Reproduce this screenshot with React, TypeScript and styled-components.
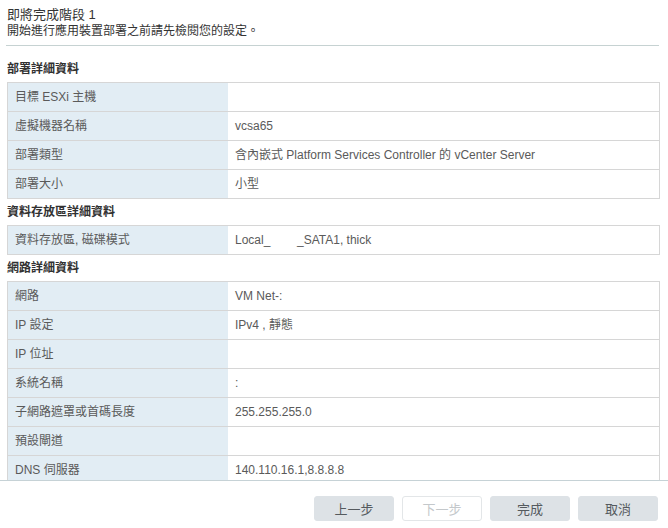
import React from "react";
import styled, { createGlobalStyle } from "styled-components";

const GlobalStyle = createGlobalStyle`
  html, body {
    margin: 0;
    padding: 0;
    background: #ffffff;
  }
  body {
    font-family: "Liberation Sans", "Noto Sans CJK TC", Arial, sans-serif;
    color: #565656;
  }
  * { box-sizing: border-box; }
`;

const Page = styled.div`
  width: 668px;
  height: 528px;
  display: flex;
  flex-direction: column;
  background: #fff;
  overflow: hidden;
`;

const Header = styled.header`
  padding: 6px 9px 0 7px;
  display: flex;
  flex-direction: column;
`;

const Title = styled.h1`
  margin: 0;
  font-size: 13px;
  font-weight: normal;
  line-height: 17px;
  color: #333;
`;

const Subtitle = styled.p`
  margin: 0;
  font-size: 12px;
  line-height: 16px;
  color: #333;
`;

const Divider = styled.hr`
  margin: 6px 9px 0 6px;
  border: 0;
  border-top: 1px solid #c6d2d2;
  height: 0;
`;

const Content = styled.main`
  flex: 1;
  min-height: 0;
  overflow: hidden;
  padding: 10px 8px 0 7px;
`;

const SectionHeading = styled.h2`
  margin: 0;
  padding: 5px 0;
  font-size: 12px;
  line-height: 16px;
  font-weight: bold;
  color: #313131;
`;

const Table = styled.div`
  display: grid;
  grid-template-columns: 220px 1fr;
  border: 1px solid #d6d6d6;
  border-bottom: 0;
`;

const LabelCell = styled.div`
  height: 29px;
  padding: 0 7px;
  line-height: 28px;
  font-size: 12px;
  color: #5a5a5a;
  background: #e2edf4;
  border-bottom: 1px solid #d6d6d6;
  white-space: nowrap;
`;

const ValueCell = styled.div`
  height: 29px;
  padding: 0 7px;
  line-height: 28px;
  font-size: 12px;
  color: #5a5a5a;
  background: #fff;
  border-bottom: 1px solid #d6d6d6;
  white-space: pre;
`;

const Footer = styled.footer`
  flex: none;
  height: 48px;
  border-top: 1px solid #c6d2d6;
  display: flex;
  justify-content: flex-end;
  align-items: flex-start;
  gap: 8px;
  padding: 15px 10px 0 0;
`;

const Button = styled.button<{ $disabled?: boolean }>`
  width: 80px;
  height: 25px;
  border-radius: 3px;
  font-family: "Liberation Sans", "Noto Sans CJK TC", Arial, sans-serif;
  font-size: 13px;
  padding: 0;
  cursor: ${(p) => (p.$disabled ? "default" : "pointer")};
  background: ${(p) => (p.$disabled ? "#ffffff" : "#dde2e6")};
  color: ${(p) => (p.$disabled ? "#c4c8cb" : "#555a5e")};
  border: 1px solid ${(p) => (p.$disabled ? "#e3e6e8" : "#dde2e6")};
`;

type Item = [string, string];

const sections: { title: string; rows: Item[] }[] = [
  {
    title: "部署詳細資料",
    rows: [
      ["目標 ESXi 主機", ""],
      ["虛擬機器名稱", "vcsa65"],
      ["部署類型", "含內嵌式 Platform Services Controller 的 vCenter Server"],
      ["部署大小", "小型"],
    ],
  },
  {
    title: "資料存放區詳細資料",
    rows: [["資料存放區, 磁碟模式", "Local_\u00a0\u00a0\u00a0\u00a0\u00a0\u00a0\u00a0\u00a0_SATA1, thick"]],
  },
  {
    title: "網路詳細資料",
    rows: [
      ["網路", "VM Net-:"],
      ["IP 設定", "IPv4 , 靜態"],
      ["IP 位址", ""],
      ["系統名稱", ":"],
      ["子網路遮罩或首碼長度", "255.255.255.0"],
      ["預設閘道", ""],
      ["DNS 伺服器", "140.110.16.1,8.8.8.8"],
    ],
  },
];

export default function App() {
  return (
    <>
      <GlobalStyle />
      <Page>
        <Header>
          <Title>即將完成階段 1</Title>
          <Subtitle>開始進行應用裝置部署之前請先檢閱您的設定。</Subtitle>
        </Header>
        <Divider />
        <Content>
          {sections.map((s) => (
            <section key={s.title}>
              <SectionHeading>{s.title}</SectionHeading>
              <Table>
                {s.rows.map(([k, v]) => (
                  <React.Fragment key={k}>
                    <LabelCell>{k}</LabelCell>
                    <ValueCell>{v}</ValueCell>
                  </React.Fragment>
                ))}
              </Table>
            </section>
          ))}
        </Content>
        <Footer>
          <Button>上一步</Button>
          <Button $disabled disabled>
            下一步
          </Button>
          <Button>完成</Button>
          <Button>取消</Button>
        </Footer>
      </Page>
    </>
  );
}
